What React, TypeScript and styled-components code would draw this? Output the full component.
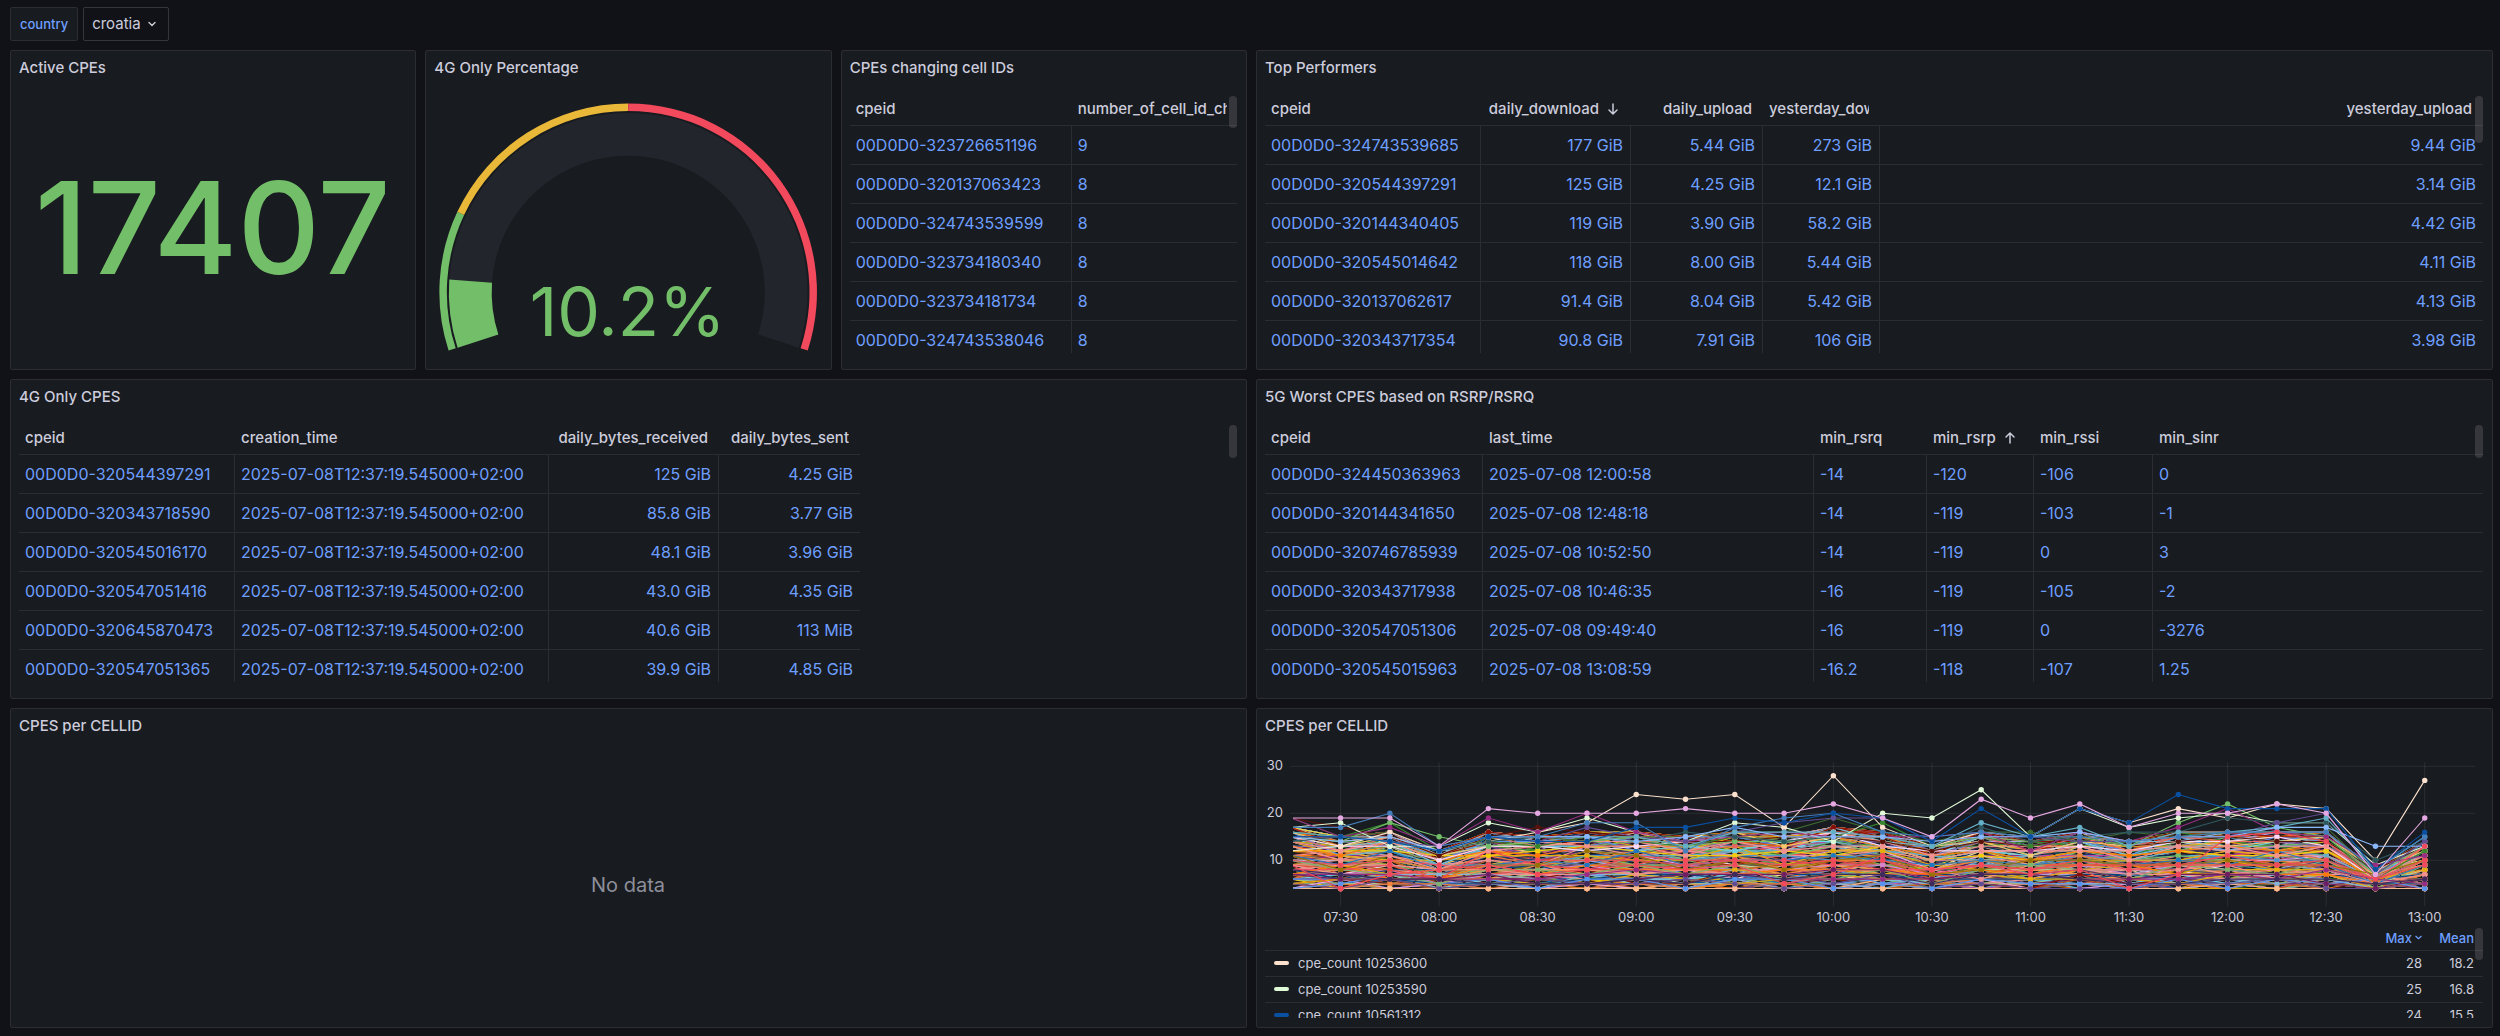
import React from "react";
import styled, { createGlobalStyle } from "styled-components";

const color = {
  canvas: "#111217",
  panel: "#181b1f",
  border: "#2b2d33",
  line: "#2b2d32",
  text: "#ccccdc",
  muted: "#8e8f9a",
  link: "#6e9fff",
  green: "#73bf69",
  yellow: "#eab839",
  red: "#f2495c",
  track: "#22252b",
};

const GlobalStyle = createGlobalStyle`
  *, *::before, *::after { box-sizing: border-box; }
  body {
    margin: 0;
    background: ${color.canvas};
    color: ${color.text};
    font-family: Inter, "Liberation Sans", sans-serif;
    font-size: 15px;
    font-optical-sizing: none;
    line-height: 24px;
  }
`;

const Page = styled.main`
  padding: 7px 7px 8px 10px;
`;

const Toolbar = styled.form`
  display: flex;
  gap: 5px;
  height: 34px;
  margin-bottom: 9px;
`;

const VariableLabel = styled.label`
  display: flex;
  align-items: center;
  padding: 0 9px;
  border: 1px solid ${color.border};
  border-radius: 2px;
  background: ${color.panel};
  color: ${color.link};
  font-size: 13px;
  font-weight: 500;
`;

const SelectBox = styled.div`
  display: grid;
  align-items: center;
  border: 1px solid #34363c;
  border-radius: 2px;

  select, svg { grid-area: 1 / 1; }
  svg { justify-self: end; margin-right: 12px; pointer-events: none; }
`;

const VariableSelect = styled.select`
  appearance: none;
  height: 100%;
  padding: 0 27px 0 8px;
  border: 0;
  background: transparent;
  color: ${color.text};
  font: inherit;
`;

const Dashboard = styled.div`
  display: grid;
  grid-template-columns: repeat(6, minmax(0, 1fr));
  grid-auto-rows: 320px;
  gap: 9px;
`;

const PanelFrame = styled.section<{ $span: number }>`
  grid-column: span ${(p) => p.$span};
  display: flex;
  flex-direction: column;
  min-width: 0;
  padding: 0 9px 0 8px;
  border: 1px solid ${color.border};
  border-radius: 2px;
  background: ${color.panel};
`;

const PanelTitle = styled.h2`
  flex: none;
  margin: 0;
  height: 36px;
  font-size: 15px;
  font-weight: 500;
  line-height: 34px;
`;

const PanelBody = styled.div<{ $inset: number }>`
  position: relative;
  flex: 1;
  display: flex;
  flex-direction: column;
  min-height: 0;
  margin-bottom: ${(p) => p.$inset}px;
  overflow: hidden;
`;

const ScrollThumb = styled.span<{ $top: number; $height: number }>`
  position: absolute;
  right: 0;
  top: ${(p) => p.$top}px;
  width: 8px;
  height: ${(p) => p.$height}px;
  border-radius: 4px;
  background: rgba(204, 204, 220, 0.16);
`;

const Centered = styled.div`
  flex: 1;
  display: flex;
  align-items: center;
  justify-content: center;
`;

const StatValue = styled.span`
  color: ${color.green};
  font-size: 128px;
  font-weight: 500;
  line-height: 128px;
`;

const NoData = styled.span`
  color: ${color.muted};
  font-size: 20px;
`;

const GaugeSvg = styled.svg`
  display: block;
  width: 100%;
  height: 100%;

  text {
    fill: ${color.green};
    font-family: Inter, "Liberation Sans", sans-serif;
    font-size: 68px;
    text-anchor: middle;
  }
`;

const Table = styled.table<{ $fill: boolean }>`
  flex: none;
  width: ${(p) => (p.$fill ? "100%" : "841px")};
  table-layout: fixed;
  border-collapse: separate;
  border-spacing: 0;
`;

const HeadCell = styled.th<{ $right?: boolean }>`
  height: 39px;
  padding: 6px ${(p) => (p.$right ? 11 : 10)}px 0 6px;
  border-bottom: 1px solid ${color.line};
  overflow: hidden;
  font-weight: 500;
  text-align: left;
  white-space: nowrap;
`;

const SortButton = styled.button<{ $right?: boolean }>`
  display: flex;
  align-items: center;
  justify-content: ${(p) => (p.$right ? "safe flex-end" : "flex-start")};
  gap: 7px;
  width: 100%;
  padding: 0;
  border: 0;
  overflow: hidden;
  background: none;
  color: inherit;
  font: inherit;
  line-height: 24px;
  white-space: nowrap;

  svg { flex: none; }
`;

const BodyCell = styled.td<{ $right?: boolean }>`
  height: 39px;
  padding: 0 7px 1px 6px;
  border-right: 1px solid ${color.line};
  border-bottom: 1px solid ${color.line};
  font-size: 16px;
  text-align: ${(p) => (p.$right ? "right" : "left")};
  white-space: nowrap;

  &:last-child { border-right: 0; }
`;

const DataLink = styled.a`
  color: ${color.link};
  text-decoration: none;
`;

const ChartSvg = styled.svg`
  display: block;
  flex: none;
  width: 100%;

  text {
    fill: ${color.text};
    font-family: Inter, "Liberation Sans", sans-serif;
    font-size: 13px;
  }
`;

const Legend = styled.div`
  position: relative;
  flex: 1;
  min-height: 0;
  overflow: hidden;
`;

const LegendTable = styled.table`
  width: 100%;
  border-collapse: separate;
  border-spacing: 0;
  font-size: 13px;
  line-height: 20px;

  th, td {
    height: 26px;
    padding: 0 9px 1px;
    border-bottom: 1px solid ${color.line};
    font-weight: 400;
    text-align: left;
  }
  th { height: 25px; color: ${color.link}; font-weight: 500; }
  th:nth-child(n + 2), td:nth-child(n + 2) {
    width: 52px;
    padding: 0 9px 1px 0;
    text-align: right;
    white-space: nowrap;
  }
`;

const LegendSort = styled.button`
  display: inline-flex;
  align-items: center;
  gap: 3px;
  padding: 0;
  border: 0;
  background: none;
  color: inherit;
  font: inherit;
`;

const LegendName = styled.button`
  display: flex;
  align-items: center;
  gap: 9px;
  padding: 0;
  border: 0;
  background: none;
  color: inherit;
  font: inherit;
`;

const Swatch = styled.span<{ $color: string }>`
  width: 15px;
  height: 4px;
  border-radius: 2px;
  background: ${(p) => p.$color};
`;

type Column = { name: string; width?: number; right?: boolean; sort?: "asc" | "desc" };

const Chevron = ({ size }: { size: number }) => (
  <svg width={size} height={size} viewBox="0 0 8 8" fill="none" stroke="currentColor" strokeWidth="1.4" strokeLinecap="round" strokeLinejoin="round" aria-hidden="true">
    <path d="M1 2.6 4 5.4 7 2.6" />
  </svg>
);

const SortArrow = ({ dir }: { dir: "asc" | "desc" }) => (
  <svg width="14" height="14" viewBox="0 0 14 14" fill="none" stroke="currentColor" strokeWidth="1.5" strokeLinecap="round" strokeLinejoin="round" aria-hidden="true">
    <path d={dir === "desc" ? "M7 2v10M3 8l4 4 4-4" : "M7 12V2M3 6l4-4 4 4"} />
  </svg>
);

function Panel({ title, span, inset = 16, children }: { title: string; span: number; inset?: number; children: React.ReactNode }) {
  return (
    <PanelFrame $span={span}>
      <PanelTitle>{title}</PanelTitle>
      <PanelBody $inset={inset}>{children}</PanelBody>
    </PanelFrame>
  );
}

function DataTable({ columns, rows, thumb }: { columns: Column[]; rows: string[][]; thumb: number }) {
  const fill = columns.some((c) => c.width === undefined);
  return (
    <>
      <Table $fill={fill}>
        <colgroup>
          {columns.map((c) => (
            <col key={c.name} style={c.width ? { width: c.width } : undefined} />
          ))}
        </colgroup>
        <thead>
          <tr>
            {columns.map((c) => (
              <HeadCell key={c.name} $right={c.right} scope="col">
                <SortButton type="button" $right={c.right}>
                  {c.name}
                  {c.sort && <SortArrow dir={c.sort} />}
                </SortButton>
              </HeadCell>
            ))}
          </tr>
        </thead>
        <tbody>
          {rows.map((row) => (
            <tr key={row[0]}>
              {row.map((value, i) => (
                <BodyCell key={columns[i].name} $right={columns[i].right}>
                  <DataLink href="#cpe">{value}</DataLink>
                </BodyCell>
              ))}
            </tr>
          ))}
        </tbody>
      </Table>
      <ScrollThumb $top={9} $height={thumb} />
    </>
  );
}

/* ---------- gauge ---------- */

const SWEEP = 216;
const START = 198;

function sector(cx: number, cy: number, outer: number, inner: number, from: number, to: number) {
  const point = (r: number, f: number) => {
    const a = ((START - SWEEP * f) * Math.PI) / 180;
    return `${(cx + r * Math.cos(a)).toFixed(2)} ${(cy - r * Math.sin(a)).toFixed(2)}`;
  };
  const large = (to - from) * SWEEP > 180 ? 1 : 0;
  return `M${point(outer, from)}A${outer} ${outer} 0 ${large} 1 ${point(outer, to)}L${point(inner, to)}A${inner} ${inner} 0 ${large} 0 ${point(inner, from)}Z`;
}

function Gauge({ value }: { value: number }) {
  const cx = 194.5;
  const cy = 206;
  return (
    <GaugeSvg viewBox="0 0 388 267" role="img" aria-label={`${value}%`}>
      <path d={sector(cx, cy, 180, 137, 0, 1)} fill={color.track} />
      <path d={sector(cx, cy, 180, 137, 0, value / 100)} fill={color.green} />
      <path d={sector(cx, cy, 189.5, 182, 0, 0.2)} fill={color.green} />
      <path d={sector(cx, cy, 189.5, 182, 0.2, 0.5)} fill={color.yellow} />
      <path d={sector(cx, cy, 189.5, 182, 0.5, 1)} fill={color.red} />
      <text x="194" y="250">{value}%</text>
    </GaugeSvg>
  );
}

/* ---------- time series ---------- */

const palette = (
  "7EB26D EAB839 6ED0E0 EF843C E24D42 1F78C1 BA43A9 705DA0 508642 CCA300 447EBC C15C17 890F02 0A437C 6D1F62 584477 " +
  "B7DBAB F4D598 70DBED F9BA8F F29191 82B5D8 E5A8E2 AEA2E0 629E51 E5AC0E 64B0C8 E0752D BF1B00 0A50A1 962D82 614D93 " +
  "9AC48A F2C96D 65C5DB F9934E EA6460 5195CE D683CE 806EB7 3F6833 967302 2F575E 99440A 58140C 052B51 511749 3F2B5B " +
  "F9E2D2 BADFF4 F9D9F9 73BF69 F2CC0C 8AB8FF FF780A F2495C 5794F2 B877D9 37872D FADE2A " +
  "F29191 FF780A E0752D F2CC0C 82B5D8 5195CE EF843C F29191 614D93 FF780A C15C17 F2495C E5AC0E F9934E 890F02"
).split(" ").map((c) => `#${c}`);

type Series = { color: string; values: number[] };

/* Busiest cells, one value every 15 minutes from 07:15 to 13:00. */
const leaders: Series[] = [
  { color: "#58140C", values: [19, 17, 15, 11, 15, 17, 16, 15, 14, 14, 15, 15, 14, 12, 14, 13, 15, 13, 14, 15, 14, 14, 8, 13] },
  { color: "#37872D", values: [16, 15, 18, 12, 14, 13, 15, 14, 13, 15, 14, 15, 18, 13, 15, 13, 14, 14, 15, 16, 16, 15, 6, 12] },
  { color: "#3F6833", values: [19, 15, 16, 12, 14, 15, 14, 15, 13, 16, 16, 19, 16, 14, 16, 16, 14, 16, 15, 15, 17, 17, 7, 14] },
  { color: "#73BF69", values: [15, 14, 18, 15, 13, 14, 14, 15, 13, 14, 14, 15, 15, 13, 15, 14, 15, 13, 18, 22, 17, 15, 7, 13] },
  { color: "#E0F9D7", values: [17, 18, 13, 13, 18, 16, 19, 16, 14, 18, 17, 14, 20, 19, 25, 15, 21, 17, 19, 20, 18, 18, 9, 13] },
  { color: "#FCE2CE", values: [12, 13, 16, 12, 14, 16, 18, 24, 23, 24, 17, 28, 17, 13, 16, 15, 21, 18, 21, 19, 22, 21, 10, 27] },
  { color: "#962D82", values: [19, 15, 17, 13, 19, 16, 20, 16, 14, 15, 16, 15, 15, 15, 16, 12, 16, 14, 17, 21, 16, 15, 9, 11] },
  { color: "#2F575E", values: [14, 15, 14, 12, 14, 15, 15, 14, 16, 15, 14, 15, 15, 13, 17, 14, 15, 16, 16, 19, 18, 18, 10, 14] },
  { color: "#614D93", values: [15, 15, 14, 13, 15, 14, 17, 15, 14, 16, 18, 19, 19, 14, 15, 15, 14, 14, 15, 15, 18, 20, 7, 14] },
  { color: "#64B0C8", values: [16, 15, 14, 12, 15, 15, 15, 15, 13, 16, 16, 16, 15, 13, 18, 15, 17, 13, 16, 16, 17, 19, 8, 15] },
  { color: "#8AB8FF", values: [15, 14, 15, 12, 15, 15, 15, 14, 15, 17, 15, 15, 15, 14, 15, 15, 16, 14, 15, 15, 17, 17, 13, 13] },
  { color: "#447EBC", values: [17, 17, 20, 13, 15, 15, 18, 18, 12, 17, 19, 20, 16, 15, 16, 15, 15, 14, 15, 16, 16, 16, 8, 15] },
  { color: "#F2495C", values: [9, 4, 7, 8, 9, 7, 8, 9, 8, 9, 5, 7, 11, 8, 9, 7, 8, 4, 7, 15, 16, 14, 6, 13] },
  { color: "#0A50A1", values: [15, 15, 14, 12, 15, 14, 14, 17, 17, 19, 18, 20, 19, 14, 21, 15, 21, 18, 24, 21, 21, 21, 8, 16] },
  { color: "#E5A8E2", values: [19, 19, 19, 13, 21, 20, 20, 20, 21, 20, 20, 22, 19, 15, 23, 19, 22, 17, 20, 20, 22, 20, 7, 19] },
];

const ceiling = [17, 15, 16, 12, 16, 15, 16, 16, 15, 16, 15, 17, 16, 13, 16, 14, 16, 14, 16, 16, 16, 16, 8, 14];

function random(seed: number) {
  let s = seed;
  return () => {
    s = (s + 0x6d2b79f5) | 0;
    let t = Math.imul(s ^ (s >>> 15), 1 | s);
    t = (t + Math.imul(t ^ (t >>> 7), 61 | t)) ^ t;
    return ((t ^ (t >>> 14)) >>> 0) / 4294967296;
  };
}

function crowd(count: number): Series[] {
  const next = random(20250708);
  return Array.from({ length: count }, (_, i) => {
    const rank = i % 20 === 0 ? 0 : next();
    return {
      color: palette[Math.floor(next() * palette.length)],
      values: ceiling.map((top) => {
        const drift = (next() + next() - 1) * 2.2;
        const v = 4 + (top - 4) * rank + drift * (rank === 0 ? 0.4 : 1);
        return Math.max(4, Math.min(top, Math.round(v)));
      }),
    };
  });
}

const series = [...crowd(260), ...leaders];
const hours = ["07:30", "08:00", "08:30", "09:00", "09:30", "10:00", "10:30", "11:00", "11:30", "12:00", "12:30", "13:00"];

const px = (i: number) => 26.3 + 49.28 * i;
const py = (v: number) => 162.3 - 4.7 * v;

function CellChart() {
  return (
    <ChartSvg viewBox="0 0 1218 181" role="img" aria-label="CPE count per cell over time">
      <clipPath id="plot">
        <rect x="28" y="10" width="1190" height="160" />
      </clipPath>
      <g stroke="rgba(204,204,220,0.1)">
        {[30, 20, 10].map((v) => (
          <path key={v} d={`M25 ${py(v).toFixed(1)}H1210`} />
        ))}
        {hours.map((h, i) => (
          <path key={h} d={`M${px(i * 2 + 1).toFixed(1)} 17V161`} />
        ))}
      </g>
      <g clipPath="url(#plot)">
        {series.map((s, n) => (
          <g key={n}>
            <polyline
              points={s.values.map((v, i) => `${px(i).toFixed(1)},${py(v).toFixed(1)}`).join(" ")}
              fill="none"
              stroke={s.color}
              strokeWidth="1.1"
            />
            {s.values.slice(1).map((v, i) => (
              <circle key={i} cx={px(i + 1)} cy={py(v)} r="2.7" fill={s.color} />
            ))}
          </g>
        ))}
      </g>
      {[30, 20, 10].map((v) => (
        <text key={v} x="18" y={py(v) + 4} textAnchor="end">{v}</text>
      ))}
      {hours.map((h, i) => (
        <text key={h} x={px(i * 2 + 1)} y="177" textAnchor="middle">{h}</text>
      ))}
    </ChartSvg>
  );
}

const legend = [
  { name: "cpe_count 10253600", color: "#FCE2CE", max: "28", mean: "18.2" },
  { name: "cpe_count 10253590", color: "#E0F9D7", max: "25", mean: "16.8" },
  { name: "cpe_count 10561312", color: "#0A50A1", max: "24", mean: "15.5" },
];

/* ---------- table data ---------- */

const changing = [
  ["00D0D0-323726651196", "9"],
  ["00D0D0-320137063423", "8"],
  ["00D0D0-324743539599", "8"],
  ["00D0D0-323734180340", "8"],
  ["00D0D0-323734181734", "8"],
  ["00D0D0-324743538046", "8"],
];

const performers = [
  ["00D0D0-324743539685", "177 GiB", "5.44 GiB", "273 GiB", "9.44 GiB"],
  ["00D0D0-320544397291", "125 GiB", "4.25 GiB", "12.1 GiB", "3.14 GiB"],
  ["00D0D0-320144340405", "119 GiB", "3.90 GiB", "58.2 GiB", "4.42 GiB"],
  ["00D0D0-320545014642", "118 GiB", "8.00 GiB", "5.44 GiB", "4.11 GiB"],
  ["00D0D0-320137062617", "91.4 GiB", "8.04 GiB", "5.42 GiB", "4.13 GiB"],
  ["00D0D0-320343717354", "90.8 GiB", "7.91 GiB", "106 GiB", "3.98 GiB"],
];

const created = "2025-07-08T12:37:19.545000+02:00";
const only4g = [
  ["00D0D0-320544397291", created, "125 GiB", "4.25 GiB"],
  ["00D0D0-320343718590", created, "85.8 GiB", "3.77 GiB"],
  ["00D0D0-320545016170", created, "48.1 GiB", "3.96 GiB"],
  ["00D0D0-320547051416", created, "43.0 GiB", "4.35 GiB"],
  ["00D0D0-320645870473", created, "40.6 GiB", "113 MiB"],
  ["00D0D0-320547051365", created, "39.9 GiB", "4.85 GiB"],
];

const worst5g = [
  ["00D0D0-324450363963", "2025-07-08 12:00:58", "-14", "-120", "-106", "0"],
  ["00D0D0-320144341650", "2025-07-08 12:48:18", "-14", "-119", "-103", "-1"],
  ["00D0D0-320746785939", "2025-07-08 10:52:50", "-14", "-119", "0", "3"],
  ["00D0D0-320343717938", "2025-07-08 10:46:35", "-16", "-119", "-105", "-2"],
  ["00D0D0-320547051306", "2025-07-08 09:49:40", "-16", "-119", "0", "-3276"],
  ["00D0D0-320545015963", "2025-07-08 13:08:59", "-16.2", "-118", "-107", "1.25"],
];

export default function App() {
  return (
    <Page>
      <GlobalStyle />
      <Toolbar>
        <VariableLabel htmlFor="country">country</VariableLabel>
        <SelectBox>
          <VariableSelect id="country" defaultValue="croatia">
            <option value="croatia">croatia</option>
          </VariableSelect>
          <Chevron size={8} />
        </SelectBox>
      </Toolbar>
      <Dashboard>
        <Panel title="Active CPEs" span={1} inset={0}>
          <Centered><StatValue>17407</StatValue></Centered>
        </Panel>
        <Panel title="4G Only Percentage" span={1}>
          <Gauge value={10.2} />
        </Panel>
        <Panel title="CPEs changing cell IDs" span={1}>
          <DataTable
            columns={[{ name: "cpeid", width: 222 }, { name: "number_of_cell_id_changes" }]}
            rows={changing}
            thumb={32}
          />
        </Panel>
        <Panel title="Top Performers" span={3}>
          <DataTable
            columns={[
              { name: "cpeid", width: 216 },
              { name: "daily_download", width: 150, right: true, sort: "desc" },
              { name: "daily_upload", width: 132, right: true },
              { name: "yesterday_download", width: 117, right: true },
              { name: "yesterday_upload", right: true },
            ]}
            rows={performers}
            thumb={47}
          />
        </Panel>
        <Panel title="4G Only CPES" span={3}>
          <DataTable
            columns={[
              { name: "cpeid", width: 216 },
              { name: "creation_time", width: 314 },
              { name: "daily_bytes_received", width: 170, right: true },
              { name: "daily_bytes_sent", width: 141, right: true },
            ]}
            rows={only4g}
            thumb={33}
          />
        </Panel>
        <Panel title="5G Worst CPES based on RSRP/RSRQ" span={3}>
          <DataTable
            columns={[
              { name: "cpeid", width: 218 },
              { name: "last_time", width: 331 },
              { name: "min_rsrq", width: 113 },
              { name: "min_rsrp", width: 107, sort: "asc" },
              { name: "min_rssi", width: 119 },
              { name: "min_sinr" },
            ]}
            rows={worst5g}
            thumb={33}
          />
        </Panel>
        <Panel title="CPES per CELLID" span={3} inset={2}>
          <Centered><NoData>No data</NoData></Centered>
        </Panel>
        <Panel title="CPES per CELLID" span={3} inset={9}>
          <CellChart />
          <Legend>
            <LegendTable>
              <thead>
                <tr>
                  <th scope="col" aria-label="Series" />
                  <th scope="col"><LegendSort type="button">Max<Chevron size={7} /></LegendSort></th>
                  <th scope="col"><LegendSort type="button">Mean</LegendSort></th>
                </tr>
              </thead>
              <tbody>
                {legend.map((l) => (
                  <tr key={l.name}>
                    <td><LegendName type="button"><Swatch $color={l.color} />{l.name}</LegendName></td>
                    <td>{l.max}</td>
                    <td>{l.mean}</td>
                  </tr>
                ))}
              </tbody>
            </LegendTable>
            <ScrollThumb $top={2} $height={32} />
          </Legend>
        </Panel>
      </Dashboard>
    </Page>
  );
}
